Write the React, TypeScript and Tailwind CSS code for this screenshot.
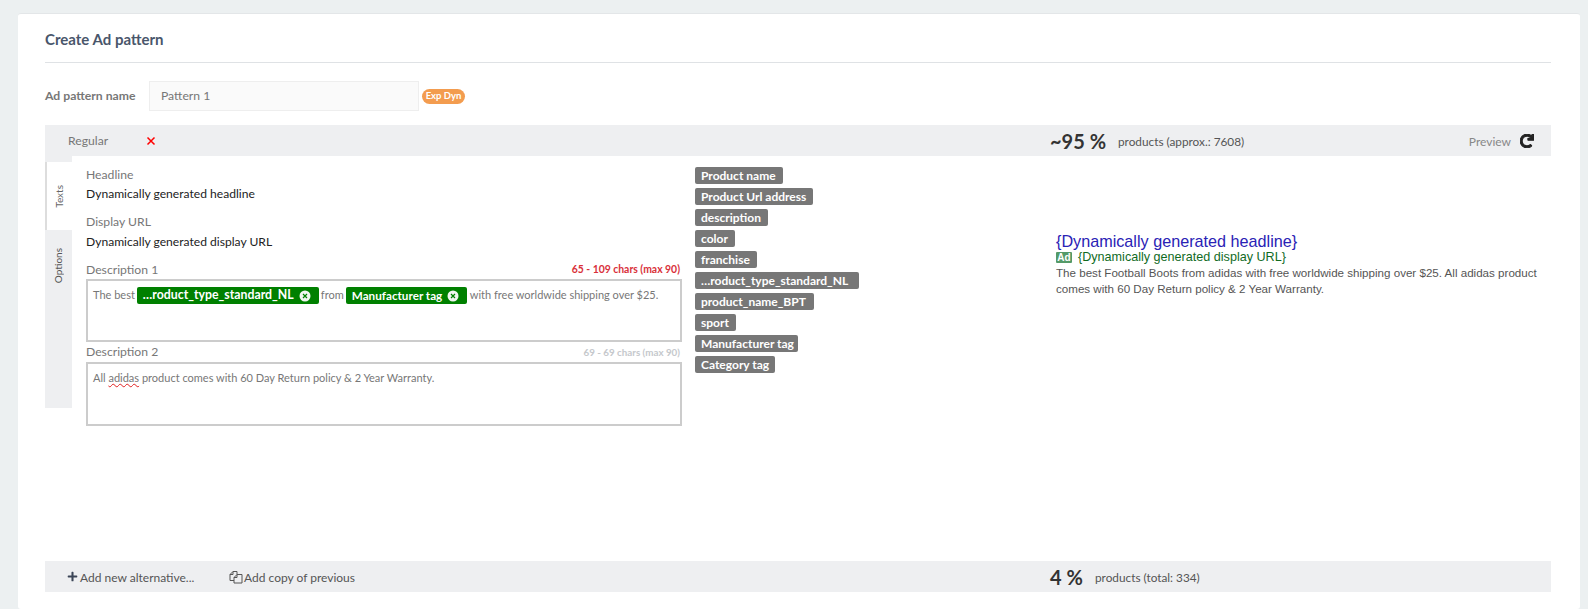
import { FaPlus, FaRedo } from 'react-icons/fa';

const tags = [
  { label: 'Product name', width: 'w-[88px]' },
  { label: 'Product Url address', width: 'w-[118px]' },
  { label: 'description', width: 'w-[73px]' },
  { label: 'color', width: 'w-[40px]' },
  { label: 'franchise', width: 'w-[62px]' },
  { label: '…roduct_type_standard_NL', width: 'w-[164px]' },
  { label: 'product_name_BPT', width: 'w-[119px]' },
  { label: 'sport', width: 'w-[41px]' },
  { label: 'Manufacturer tag', width: 'w-[103px]' },
  { label: 'Category tag', width: 'w-[80px]' },
];

function TagChip({ label, width, size }: { label: string; width: string; size: string }) {
  return (
    <div className={`h-[17px] ${width} ${size} flex items-center justify-between rounded-[2px] bg-[#008000] pl-[6px] pr-[8px] font-bold text-white whitespace-nowrap`}>
      <span>{label}</span>
      <svg className="w-[12px] h-[12px] shrink-0" viewBox="0 0 12 12">
        <circle cx="6" cy="6" r="5.5" fill="#f1f5f1" />
        <path d="M4 4l4 4M8 4l-4 4" stroke="#008000" strokeWidth="1.2" />
      </svg>
    </div>
  );
}

function FieldLabel({ label, note, noteClass }: { label: string; note: string; noteClass: string }) {
  return (
    <div className="flex items-center justify-between h-[18px] pr-[2px]">
      <span className="text-[12.2px] text-[#777]">{label}</span>
      <span className={`font-bold ${noteClass}`}>{note}</span>
    </div>
  );
}

export default function App() {
  return (
    <div className="h-[609px] overflow-hidden bg-[#ecf0f1] pt-[13px] pl-[18px] pr-[8px] font-['Lato','Liberation_Sans',sans-serif]">
      <div className="h-[596px] rounded-[3px] border-t border-[#e3e6e8] bg-white px-[27px] pr-[29px]">
        {/* Header */}
        <div className="h-[49px] border-b border-[#dfe2e5] pt-[15px]">
          <h2 className="text-[15px] leading-[20px] font-bold text-[#49566b]">Create Ad pattern</h2>
        </div>

        {/* Pattern name */}
        <div className="flex items-center mt-[18px] h-[30px]">
          <span className="w-[104px] text-[12.2px] font-bold text-[#777]">Ad pattern name</span>
          <div className="w-[270px] h-[30px] flex items-center border border-[#eeeeee] bg-[#fafafa] pl-[11px] text-[12.2px] text-[#777]">
            Pattern 1
          </div>
          <span className="ml-[3px] h-[15px] w-[43px] flex items-center justify-center rounded-full bg-[#f39c4f] text-[9.5px] font-bold text-[#fff]">
            Exp Dyn
          </span>
        </div>

        {/* Alternative bar */}
        <div className="flex items-center h-[31px] mt-[14px] bg-[#eeeff1] text-[#777]">
          <span className="w-[101px] pl-[23px] pt-[2px] text-[12.2px]">Regular</span>
          <svg className="w-[10px] h-[10px] text-[#ff0000]" viewBox="0 0 10 10">
            <path d="M1.5 1.5l7 7M8.5 1.5l-7 7" stroke="currentColor" strokeWidth="1.5" />
          </svg>
          <div className="flex items-center ml-[894px]">
            <span className="w-[68px] text-[20px] font-bold text-[#333]">~95 %</span>
            <span className="pt-[2px] text-[11.8px] text-[#555]">products (approx.: 7608)</span>
          </div>
          <span className="ml-auto pt-[2px] text-[12px] text-[#888]">Preview</span>
          <FaRedo className="ml-[9px] mr-[17px] w-[14px] h-[14px] text-[#222] stroke-current stroke-[40]" />
        </div>

        {/* Editor */}
        <div className="flex h-[405px]">
          <div className="w-[27px] shrink-0 flex flex-col">
            <div className="h-[6px] bg-[#eeeff1]" />
            <div className="h-[68px] border-l-2 border-[#dddddd] bg-white flex items-center justify-center">
              <span className="[writing-mode:vertical-rl] rotate-180 text-[10px] text-[#666]">Texts</span>
            </div>
            <div className="h-[178px] bg-[#eeeff1] flex justify-center pt-[18px]">
              <span className="[writing-mode:vertical-rl] rotate-180 text-[10px] text-[#555] h-fit">Options</span>
            </div>
          </div>

          <div className="w-[596px] ml-[14px] shrink-0 pt-[10px]">
            <div className="text-[12.2px] leading-[18px] text-[#777]">Headline</div>
            <div className="text-[12.1px] leading-[18px] mt-[1px] text-[#222]">Dynamically generated headline</div>
            <div className="text-[12.2px] leading-[18px] mt-[10px] text-[#777]">Display URL</div>
            <div className="text-[12.1px] leading-[18px] mt-[2px] text-[#222]">Dynamically generated display URL</div>

            <div className="mt-[10px]">
              <FieldLabel label="Description 1" note="65 - 109 chars (max 90)" noteClass="text-[10.4px] text-[#d9303a]" />
            </div>
            <div className="h-[63px] border-2 border-[#cccccc] pl-[5px] pt-[6px] flex items-start gap-[2px] text-[11px] text-[#777] whitespace-nowrap">
              <span className="leading-[15px]">The best</span>
              <TagChip label="…roduct_type_standard_NL" width="w-[182px]" size="text-[12.3px]" />
              <span className="leading-[15px]">from</span>
              <TagChip label="Manufacturer tag" width="w-[121px]" size="text-[11.7px]" />
              <span className="leading-[15px] ml-[1px]">with free worldwide shipping over $25.</span>
            </div>

            <div className="mt-[1px] mb-[1px]">
              <FieldLabel label="Description 2" note="69 - 69 chars (max 90)" noteClass="text-[9.8px] text-[#c5c8cc]" />
            </div>
            <div className="h-[64px] border-2 border-[#cccccc] pl-[5px] pt-[5px] text-[11px] leading-[17px] text-[#777] whitespace-nowrap">
              All <span className="underline decoration-wavy decoration-[#e02020] decoration-1">adidas</span> product comes with 60 Day Return policy &amp; 2 Year Warranty.
            </div>
          </div>

          <div className="w-[361px] ml-[13px] shrink-0 pt-[11px] flex flex-col gap-[4px]">
            {tags.map((tag) => (
              <div
                key={tag.label}
                className={`h-[17px] ${tag.width} flex items-center rounded-[2px] bg-[#777777] px-[6px] text-[12px] font-bold text-white whitespace-nowrap`}
              >
                {tag.label}
              </div>
            ))}
          </div>

          <div className="flex-1 pt-[76px] font-['Liberation_Sans',Arial,sans-serif]">
            <div className="text-[16.2px] leading-[18px] text-[#2a22b5] whitespace-nowrap">{'{Dynamically generated headline}'}</div>
            <div className="flex items-center h-[14px] text-[#116b1f] text-[12.6px] whitespace-nowrap">
              <span className="mr-[6px] h-[11px] w-[16px] flex items-center justify-center rounded-[1px] bg-[#549a68] text-[10px] font-bold text-white">Ad</span>
              {'{Dynamically generated display URL}'}
            </div>
            <p className="mt-[1px] text-[11.6px] leading-[16px] text-[#555]">
              The best Football Boots from adidas with free worldwide shipping over $25. All adidas product comes with 60 Day Return policy &amp; 2 Year Warranty.
            </p>
          </div>
        </div>

        {/* Footer bar */}
        <div className="flex items-center h-[31px] bg-[#eeeff1] text-[12px] text-[#555]">
          <FaPlus className="ml-[22px] w-[11px] h-[11px] text-[#3b4557]" />
          <span className="ml-[2px] w-[149px] pt-[2px]">Add new alternative...</span>
          <svg className="w-[14px] h-[14px] text-[#555]" viewBox="0 0 14 14" fill="none" stroke="currentColor" strokeWidth="1">
            <path d="M1 4.5L4 1.5H8V4.5" />
            <path d="M4 1.5V4.5H1V10.5H5" />
            <path d="M5 7.5L8 4.5H13V13H5V7.5H8V4.5" />
          </svg>
          <span className="ml-[1px] w-[806px] pt-[2px]">Add copy of previous</span>
          <span className="w-[45px] text-[20px] font-bold text-[#333]">4 %</span>
          <span className="pt-[2px] text-[11.8px] text-[#555]">products (total: 334)</span>
        </div>
      </div>
    </div>
  );
}
